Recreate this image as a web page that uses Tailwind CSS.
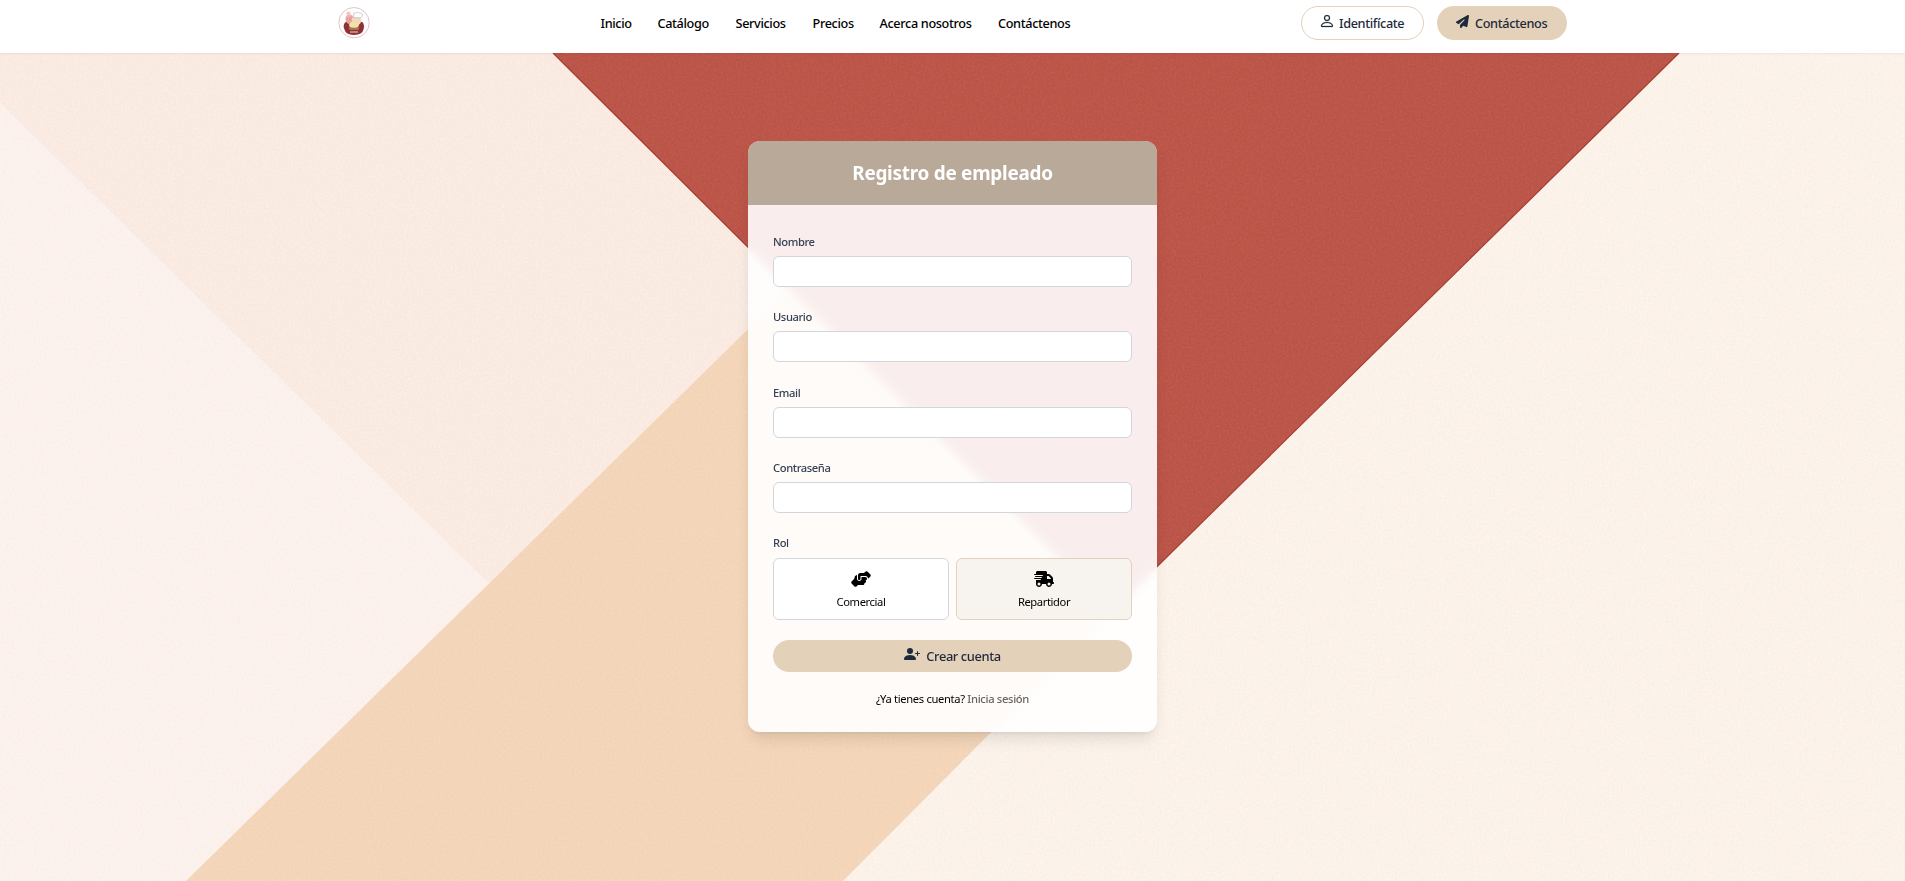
<!DOCTYPE html>
<html lang="es">
<head>
<meta charset="utf-8">
<title>Registro de empleado</title>
<script src="https://cdn.jsdelivr.net/npm/@tailwindcss/browser@4"></script>
</head>
<body class="h-screen overflow-hidden font-['Noto_Sans',sans-serif] text-black">
<div class="relative flex h-[881px] flex-col">
  <!-- Backdrop -->
  <svg class="absolute inset-0 -z-10" width="1905" height="881" viewBox="0 0 1905 881">
    <defs>
      <filter id="grain" x="0" y="0" width="100%" height="100%" color-interpolation-filters="sRGB">
        <feTurbulence type="fractalNoise" baseFrequency="0.47" numOctaves="2" seed="4"/>
        <feColorMatrix values="0 0 0 0 0.4  0 0 0 0 0.22  0 0 0 0 0.15  1 0 0 0 -0.3"/>
      </filter>
      <clipPath id="red"><path d="M500 0L553 53L1112 611L1679 53L1732 0Z"/></clipPath>
    </defs>
    <rect width="1905" height="881" fill="#fdf4eb"/>
    <path d="M0 0H500L790 289L640 640L487 582L0 103Z" fill="#fbece4"/>
    <path d="M0 103L487 582L300 881H0Z" fill="#fdf3ee"/>
    <path d="M789 289L186 881H843L1112 611Z" fill="#f5d7bb"/>
    <path d="M500 0L553 53L1112 611L1679 53L1732 0Z" fill="#c2594d"/>
    <path d="M553 53L790 289M1112 611L1679 53" stroke="#a93f36" stroke-width="1.2" fill="none"/>
    <rect width="1905" height="881" filter="url(#grain)" opacity=".05"/>
    <g clip-path="url(#red)"><rect width="1905" height="881" filter="url(#grain)" opacity=".25"/></g>
  </svg>

  <header class="flex h-[53px] shrink-0 items-start bg-white shadow-[0_1px_2px_rgba(0,0,0,0.06)]">
    <a class="mt-[7px] ml-[338px] block h-8 w-8">
      <svg width="32" height="32" viewBox="0 0 32 32">
        <circle cx="16" cy="15.7" r="15.2" fill="#fff" stroke="#dcb5b5" stroke-width=".8"/>
        <path d="M7 15.500Q4.500 19 6.500 22.500Q7.500 27.500 16 28Q24.500 27.500 25.500 22.500Q27 19 25 15.500L21 14H10Z" fill="#912f36"/>
        <circle cx="11.500" cy="11.500" r="4" fill="#edb5ab"/>
        <circle cx="10.500" cy="6.500" r="2.100" fill="#f3c7c0"/>
        <path d="M8 11Q7 16 11 17L16 14L14 9Z" fill="#e8a49c"/>
        <circle cx="18.500" cy="13.500" r="4.800" fill="#f4d9b8"/>
        <path d="M15.500 10.500L15.800 8Q14.500 5.500 18 6Q20.500 4 22 6.300Q26 6.500 24 9.200L23 10.800Z" fill="#fff" stroke="#a9b3c2" stroke-width=".6"/>
        <ellipse cx="16" cy="18" rx="5" ry="3.500" fill="#f1e1ad"/>
        <path d="M10.500 20Q16 21.500 21.500 20L20.500 23H11.500Z" fill="#a8764c"/>
        <path d="M12 25H20" stroke="#ead9d2" stroke-width="1"/>
      </svg>
    </a>
    <nav class="ml-[230.5px] grid grid-cols-[57px_78px_77px_67px_118.5px_74px] pt-[14px] text-[12.7px] leading-[19px] font-medium tracking-[-0.35px] whitespace-nowrap">
      <a>Inicio</a><a>Catálogo</a><a>Servicios</a><a>Precios</a><a>Acerca nosotros</a><a>Contáctenos</a>
    </nav>
    <div class="mt-[6px] ml-[229px] flex gap-[13px] text-[12.7px] font-medium tracking-[-0.35px] whitespace-nowrap text-gray-800">
      <a class="flex h-[34px] w-[123px] items-center rounded-full border border-[#e3d1ba] pt-px pl-[17px]">
        <svg class="-mt-[5px] mr-[4px]" width="16" height="16" viewBox="0 0 16 16" fill="currentColor" stroke="currentColor" stroke-width=".25"><path d="M8 8a3 3 0 1 0 0-6 3 3 0 0 0 0 6m2-3a2 2 0 1 1-4 0 2 2 0 0 1 4 0m4 8c0 1-1 1-1 1H3s-1 0-1-1 1-4 6-4 6 3 6 4m-1-.004c-.001-.246-.154-.986-.832-1.664C11.516 10.680 10.289 10 8 10s-3.516.68-4.168 1.332c-.678.678-.83 1.418-.832 1.664z"/></svg>
        Identifícate
      </a>
      <a class="flex h-[34px] w-[130px] items-center rounded-full bg-[#e4d1ba] pt-px pl-[19px]">
        <svg class="-mt-[5px] mr-[6px]" width="13" height="13" viewBox="0 0 512 512" fill="currentColor"><path d="M498.1 5.600c10.100 7 15.400 19.100 13.500 31.200l-64 416c-1.500 9.700-7.400 18.200-16 23s-18.900 5.400-28 1.600L284 427.700l-68.500 74.100c-8.900 9.700-22.900 12.900-35.200 8.100S160 493.200 160 480V396.400c0-4 1.500-7.800 4.200-10.700L331.800 202.800c5.800-6.300 5.600-16-.4-22s-15.700-6.400-22-.7L106 360.800 17.700 316.600C7.100 311.300 .3 300.700 0 288.900s5.900-22.800 16.100-28.700l448-256c10.700-6.100 23.900-5.500 34 1.400z"/></svg>
        Contáctenos
      </a>
    </div>
  </header>

  <main class="flex justify-center pt-[88px]">
    <section class="h-[591px] w-[409px] overflow-hidden rounded-xl bg-white/90 shadow-lg backdrop-blur-[4px]">
      <h1 class="flex h-16 items-center justify-center bg-[#b8a999] pt-px text-[18.9px] font-bold tracking-[-0.25px] text-white">Registro de empleado</h1>
      <form class="px-[25px] pt-[29px] text-[11.2px] tracking-[-0.4px]">
        <div class="h-[75.3px]">
          <label class="block h-[22px] leading-4 font-medium text-gray-700">Nombre</label>
          <input class="block h-[31px] w-full rounded-md border border-gray-300 bg-white">
        </div>
        <div class="h-[75.3px]">
          <label class="block h-[22px] leading-4 font-medium text-gray-700">Usuario</label>
          <input class="block h-[31px] w-full rounded-md border border-gray-300 bg-white">
        </div>
        <div class="h-[75.3px]">
          <label class="block h-[22px] leading-4 font-medium text-gray-700">Email</label>
          <input class="block h-[31px] w-full rounded-md border border-gray-300 bg-white">
        </div>
        <div class="h-[75.3px]">
          <label class="block h-[22px] leading-4 font-medium text-gray-700">Contraseña</label>
          <input class="block h-[31px] w-full rounded-md border border-gray-300 bg-white">
        </div>
        <div class="block h-[22.8px] leading-4 font-medium text-gray-700">Rol</div>
        <div class="grid grid-cols-2 gap-[7px]">
          <div class="flex h-[62px] flex-col items-center rounded-md border border-gray-300 bg-white pt-[12px]">
            <svg width="20" height="16" viewBox="0 0 640 512"><path d="M544 248v3.300l69.700-69.700c21.900-21.900 21.900-57.300 0-79.200L535.600 24.400c-21.900-21.900-57.300-21.900-79.200 0L416.300 64.500c-2.700-.3-5.500-.5-8.300-.5H296c-37.100 0-67.600 28-71.600 64H224V248c0 22.100 17.900 40 40 40s40-17.900 40-40V176c0 0 0-.1 0-.1V160l16 0 136 0c0 0 0 0 .1 0H464c44.200 0 80 35.800 80 80v8zM336 192v56c0 39.800-32.200 72-72 72s-72-32.200-72-72V129.400c-35.900 6.200-65.800 32.300-76 68.200L99.500 255.200 26.300 328.400c-21.900 21.900-21.900 57.300 0 79.200l78.100 78.100c21.900 21.900 57.300 21.900 79.200 0l37.700-37.700c.9 0 1.800 .1 2.700 .1H384c26.500 0 48-21.500 48-48c0-5.600-1-11-2.700-16H432c26.500 0 48-21.500 48-48c0-12.800-5-24.400-13.200-33c25.700-5 45.100-27.600 45.200-54.800v-.4c-.1-30.800-25.100-55.800-56-55.800c0 0 0 0 0 0l-120 0z"/></svg>
            <span class="mt-[7px] leading-4">Comercial</span>
          </div>
          <div class="flex h-[62px] flex-col items-center rounded-md border border-[#e4d1ba] bg-[#f7f3ee] pt-[12px]">
            <svg width="20" height="16" viewBox="0 0 640 512"><path d="M112 0C85.500 0 64 21.500 64 48V96H16c-8.800 0-16 7.200-16 16s7.200 16 16 16H64 272c8.800 0 16 7.200 16 16s-7.200 16-16 16H64 48c-8.800 0-16 7.200-16 16s7.200 16 16 16H64 240c8.800 0 16 7.200 16 16s-7.200 16-16 16H64 16c-8.800 0-16 7.200-16 16s7.200 16 16 16H64 208c8.800 0 16 7.200 16 16s-7.200 16-16 16H64V416c0 53 43 96 96 96s96-43 96-96H384c0 53 43 96 96 96s96-43 96-96h32c17.700 0 32-14.300 32-32s-14.300-32-32-32V288 256 237.300c0-17-6.700-33.300-18.700-45.300L512 114.700c-12-12-28.300-18.700-45.300-18.700H416V48c0-26.500-21.500-48-48-48H112zM544 237.300V256H416V160h50.700L544 237.300zM160 368a48 48 0 1 1 0 96 48 48 0 1 1 0-96zm272 48a48 48 0 1 1 96 0 48 48 0 1 1 -96 0z"/></svg>
            <span class="mt-[7px] leading-4">Repartidor</span>
          </div>
        </div>
        <button type="button" class="mt-5 flex h-8 w-full items-center justify-center rounded-full bg-[#e4d1ba] pt-px text-[12.9px] font-medium tracking-[-0.4px] text-gray-800">
          <svg class="-mt-[5px] mr-[6px]" width="16" height="16" viewBox="0 0 16 16" fill="currentColor"><path d="M1 14s-1 0-1-1 1-4 6-4 6 3 6 4-1 1-1 1zm5-6a3 3 0 1 0 0-6 3 3 0 0 0 0 6"/><path d="M13.500 5a.5.5 0 0 1 .5.5V7h1.500a.5.5 0 0 1 0 1H14v1.500a.5.5 0 0 1-1 0V8h-1.500a.5.5 0 0 1 0-1H13V5.500a.5.5 0 0 1 .5-.5"/></svg>
          Crear cuenta
        </button>
        <p class="mt-[19px] text-center leading-4 tracking-[-0.33px]">¿Ya tienes cuenta? <a class="font-medium text-[#666]">Inicia sesión</a></p>
      </form>
    </section>
  </main>
</div>
</body>
</html>
